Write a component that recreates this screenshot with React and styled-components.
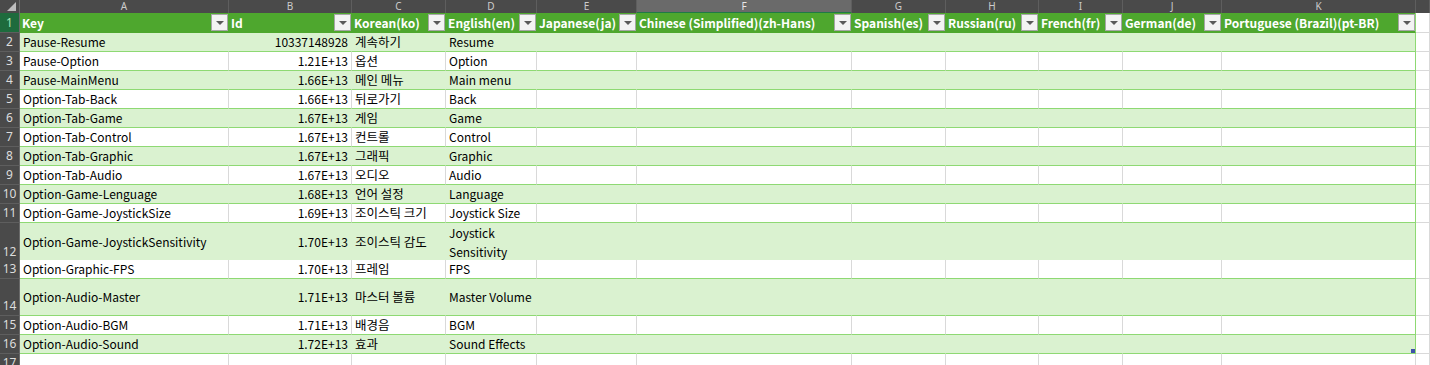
import React from "react"
import styled, { createGlobalStyle } from "styled-components"

const GlobalStyle = createGlobalStyle`
  html, body {
    margin: 0;
    padding: 0;
    background: #ffffff;
    overflow: hidden;
  }
  body {
    font-family: "Noto Sans CJK KR", "Noto Sans", sans-serif;
  }
`

const COLS = [209, 123, 94, 91, 100, 215, 94, 93, 84, 99, 194]
const TEMPLATE = `20px ${COLS.map((w) => w + "px").join(" ")} 1fr`
const LETTERS = ["A", "B", "C", "D", "E", "F", "G", "H", "I", "J", "K", ""]

const HEADERS = [
  "Key",
  "Id",
  "Korean(ko)",
  "English(en)",
  "Japanese(ja)",
  "Chinese (Simplified)(zh-Hans)",
  "Spanish(es)",
  "Russian(ru)",
  "French(fr)",
  "German(de)",
  "Portuguese (Brazil)(pt-BR)",
]

// [key, id, ko, en, tall row, wrap english]
const ROWS = [
  ["Pause-Resume", "10337148928", "계속하기", "Resume"],
  ["Pause-Option", "1.21E+13", "옵션", "Option"],
  ["Pause-MainMenu", "1.66E+13", "메인 메뉴", "Main menu"],
  ["Option-Tab-Back", "1.66E+13", "뒤로가기", "Back"],
  ["Option-Tab-Game", "1.67E+13", "게임", "Game"],
  ["Option-Tab-Control", "1.67E+13", "컨트롤", "Control"],
  ["Option-Tab-Graphic", "1.67E+13", "그래픽", "Graphic"],
  ["Option-Tab-Audio", "1.67E+13", "오디오", "Audio"],
  ["Option-Game-Lenguage", "1.68E+13", "언어 설정", "Language"],
  ["Option-Game-JoystickSize", "1.69E+13", "조이스틱 크기", "Joystick Size"],
  ["Option-Game-JoystickSensitivity", "1.70E+13", "조이스틱 감도", "Joystick Sensitivity", true, true],
  ["Option-Graphic-FPS", "1.70E+13", "프레임", "FPS"],
  ["Option-Audio-Master", "1.71E+13", "마스터 볼륨", "Master Volume", true],
  ["Option-Audio-BGM", "1.71E+13", "배경음", "BGM"],
  ["Option-Audio-Sound", "1.72E+13", "효과", "Sound Effects"],
]

const tones = {
  head: { bg: "#4ea72e", right: "#4ea72e", bottom: "#4ea72e" },
  band: { bg: "#daf2d0", right: "#daf2d0", bottom: "#8ed973" },
  plain: { bg: "#ffffff", right: "#d9d9d9", bottom: "#8ed973" },
  out: { bg: "#ffffff", right: "#d9d9d9", bottom: "#d9d9d9" },
}

const Sheet = styled.div`
  width: 1430px;
  display: flex;
  flex-direction: column;
`

const Row = styled.div`
  display: grid;
  grid-template-columns: ${TEMPLATE};
  height: ${(p) => p.$height}px;
`

const ColHeader = styled.div`
  box-sizing: border-box;
  background: ${(p) => (p.$selected ? "#6a6a6a" : "#4a4a4a")};
  border-right: 1px solid #5e5e5e;
  border-bottom: ${(p) => (p.$selected ? "2px solid #1f7a45" : "1px solid #5e5e5e")};
  color: ${(p) => (p.$selected ? "#e8e8e8" : "#cccccc")};
  font-family: "Noto Sans", sans-serif;
  font-size: 10px;
  line-height: 12px;
  text-align: center;
`

const Corner = styled.div`
  box-sizing: border-box;
  background: #4a4a4a;
  border-right: 1px solid #6a6a6a;
  border-bottom: 1px solid #5e5e5e;
  display: flex;
  align-items: flex-end;
  justify-content: flex-end;
  padding: 0 3px 2px 0;
`

const RowHeader = styled.div`
  box-sizing: border-box;
  background: ${(p) => (p.$selected ? "#1e6b3d" : "#4a4a4a")};
  border-right: 1px solid #6a6a6a;
  border-bottom: 1px solid #5e5e5e;
  color: ${(p) => (p.$selected ? "#a9e7b3" : "#dddddd")};
  font-family: "Noto Sans", sans-serif;
  font-size: 12px;
  display: flex;
  align-items: flex-end;
  justify-content: center;
  padding-bottom: 1px;
  line-height: 16px;
`

const Cell = styled.div`
  position: relative;
  box-sizing: border-box;
  background: ${(p) => tones[p.$tone].bg};
  border-right: 1px solid ${(p) => (p.$edge ? "#8ed973" : tones[p.$tone].right)};
  border-bottom: 1px solid ${(p) => tones[p.$tone].bottom};
  color: ${(p) => (p.$tone === "head" ? "#ffffff" : "#000000")};
  font-weight: ${(p) => (p.$tone === "head" ? 700 : 400)};
  font-size: ${(p) => (p.$korean ? "12.5px" : "12px")};
  line-height: 18px;
  display: flex;
  align-items: center;
  justify-content: ${(p) => (p.$right ? "flex-end" : "flex-start")};
  padding: 0 ${(p) => (p.$right ? "3px" : "0")} 0 ${(p) => (p.$tone === "head" ? "2px" : "3px")};
  white-space: ${(p) => (p.$wrap ? "normal" : "nowrap")};
  overflow: visible;
`

const Wrapped = styled.span`
  display: block;
  width: 80px;
  line-height: 19px;
`

const Label = styled.span`
  flex: 1;
  white-space: nowrap;
  overflow: hidden;
`

const FilterButton = styled.div`
  box-sizing: border-box;
  width: 17px;
  height: 17px;
  flex: none;
  background: #f3f3f3;
  border: 1px solid #a6a6a6;
  display: flex;
  align-items: center;
  justify-content: center;
`

const Arrow = styled.span`
  width: 0;
  height: 0;
  border-left: 4px solid transparent;
  border-right: 4px solid transparent;
  border-top: 4px solid #5a5a5a;
`

const ResizeHandle = styled.span`
  position: absolute;
  right: 0;
  bottom: 0;
  width: 4px;
  height: 4px;
  background: #3f51a8;
`

const Filter = () => (
  <FilterButton>
    <Arrow />
  </FilterButton>
)

const App = () => {
  return (
    <>
      <GlobalStyle />
      <Sheet>
        <Row $height={13}>
          <Corner>
            <svg width="9" height="9" viewBox="0 0 9 9">
              <polygon points="9,0 9,9 0,9" fill="#bdbdbd" />
            </svg>
          </Corner>
          {LETTERS.map((l, i) => (
            <ColHeader key={i} $selected={l === "F"}>
              {l}
            </ColHeader>
          ))}
        </Row>

        <Row $height={20}>
          <RowHeader $selected>1</RowHeader>
          {HEADERS.map((h, i) => (
            <Cell key={h} $tone="head" $edge={i === HEADERS.length - 1}>
              <Label>{h}</Label>
              <Filter />
            </Cell>
          ))}
          <Cell $tone="out" />
        </Row>

        {ROWS.map((r, idx) => {
          const tone = idx % 2 === 0 ? "band" : "plain"
          const [key, id, ko, en, tall, wrap] = r
          return (
            <Row key={key} $height={tall ? 37 : 19}>
              <RowHeader>{idx + 2}</RowHeader>
              <Cell $tone={tone}>{key}</Cell>
              <Cell $tone={tone} $right>
                {id}
              </Cell>
              <Cell $tone={tone} $korean>
                {ko}
              </Cell>
              <Cell $tone={tone} $wrap={wrap}>
                {wrap ? <Wrapped>{en}</Wrapped> : en}
              </Cell>
              {COLS.slice(4).map((_, i) => (
                <Cell key={i} $tone={tone} $edge={i === COLS.length - 5}>
                  {idx === ROWS.length - 1 && i === COLS.length - 5 && <ResizeHandle />}
                </Cell>
              ))}
              <Cell $tone="out" />
            </Row>
          )
        })}

        <Row $height={19}>
          <RowHeader>17</RowHeader>
          {COLS.map((_, i) => (
            <Cell key={i} $tone="out" />
          ))}
          <Cell $tone="out" />
        </Row>
      </Sheet>
    </>
  )
}

export default App
